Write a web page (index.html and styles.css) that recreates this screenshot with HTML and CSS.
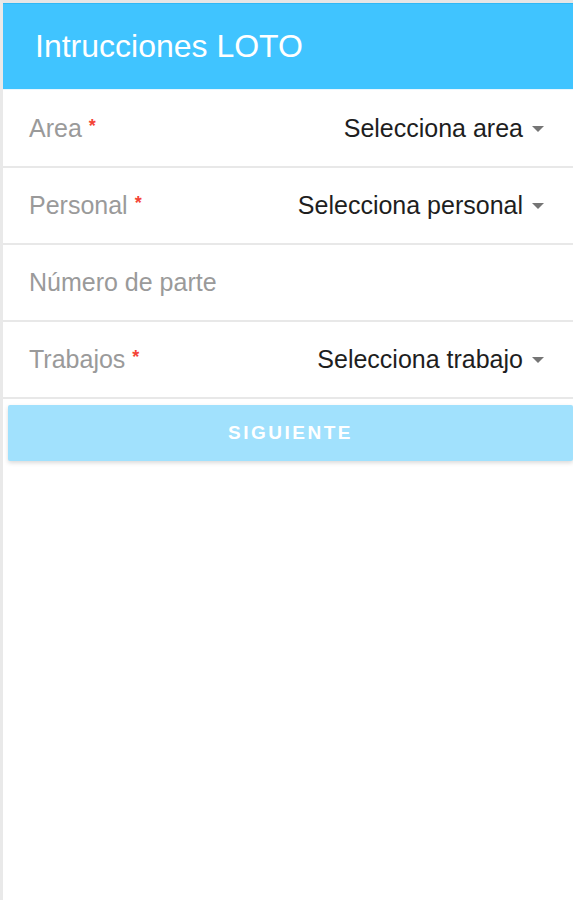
FILE: index.html
```html
<!DOCTYPE html>
<html lang="es">
<head>
    <meta charset="UTF-8">
    <meta name="viewport" content="width=device-width, initial-scale=1.0">
    <title>Intrucciones LOTO</title>
    <link rel="stylesheet" href="styles.css">
</head>
<body>
    <div class="app">
        <header class="toolbar">
            <h1>Intrucciones LOTO</h1>
        </header>

        <div class="form">
            <div class="row">
                <span class="label">Area <span class="req">*</span></span>
                <span class="select">Selecciona area <span class="caret"></span></span>
            </div>
            <div class="row">
                <span class="label">Personal <span class="req">*</span></span>
                <span class="select">Selecciona personal <span class="caret"></span></span>
            </div>
            <div class="row">
                <span class="label">Número de parte</span>
            </div>
            <div class="row">
                <span class="label">Trabajos <span class="req">*</span></span>
                <span class="select">Selecciona trabajo <span class="caret"></span></span>
            </div>
        </div>

        <button class="next-btn" disabled>Siguiente</button>
    </div>
</body>
</html>
```

FILE: styles.css
```css
body {
    margin: 0;
    padding: 0;
    font-family: "Liberation Sans", Arial, sans-serif;
    background: #ffffff;
}

.app {
    min-height: 897px;
    border-top: 3px solid #e6e6e6;
    border-left: 3px solid #e9e9e9;
    background: #ffffff;
}

.toolbar {
    height: 87px;
    background: #40c4ff;
    border-top: 1px solid #2fb8f5;
    border-bottom: 1px solid #e8f7fe;
    display: flex;
    align-items: center;
    padding-left: 32px;
    box-sizing: border-box;
}

.toolbar h1 {
    margin: 0;
    font-size: 32px;
    font-weight: normal;
    color: #ffffff;
}

.form {
    margin-top: 1px;
}

.row {
    height: 77px;
    display: flex;
    align-items: center;
    justify-content: space-between;
    padding: 0 29px 0 26px;
    border-bottom: 2px solid #e8e8e8;
    box-sizing: border-box;
}

.label {
    font-size: 25px;
    color: #9a9a9a;
}

.req {
    color: #f44336;
    font-size: 18px;
    font-weight: bold;
    vertical-align: 5px;
}

.select {
    font-size: 25px;
    color: #1e1e1e;
    display: flex;
    align-items: center;
}

.caret {
    width: 0;
    height: 0;
    margin-left: 9px;
    border-left: 6px solid transparent;
    border-right: 6px solid transparent;
    border-top: 6px solid #757575;
}

.next-btn {
    display: block;
    width: calc(100% - 5px);
    margin: 6px 0 0 5px;
    height: 56px;
    border: none;
    border-radius: 2px;
    background: #a1e1fd;
    color: #ffffff;
    font-family: "Liberation Sans", Arial, sans-serif;
    font-size: 19px;
    font-weight: bold;
    letter-spacing: 2.5px;
    text-transform: uppercase;
    box-shadow: 0 2px 4px rgba(0, 0, 0, 0.15);
}
```
